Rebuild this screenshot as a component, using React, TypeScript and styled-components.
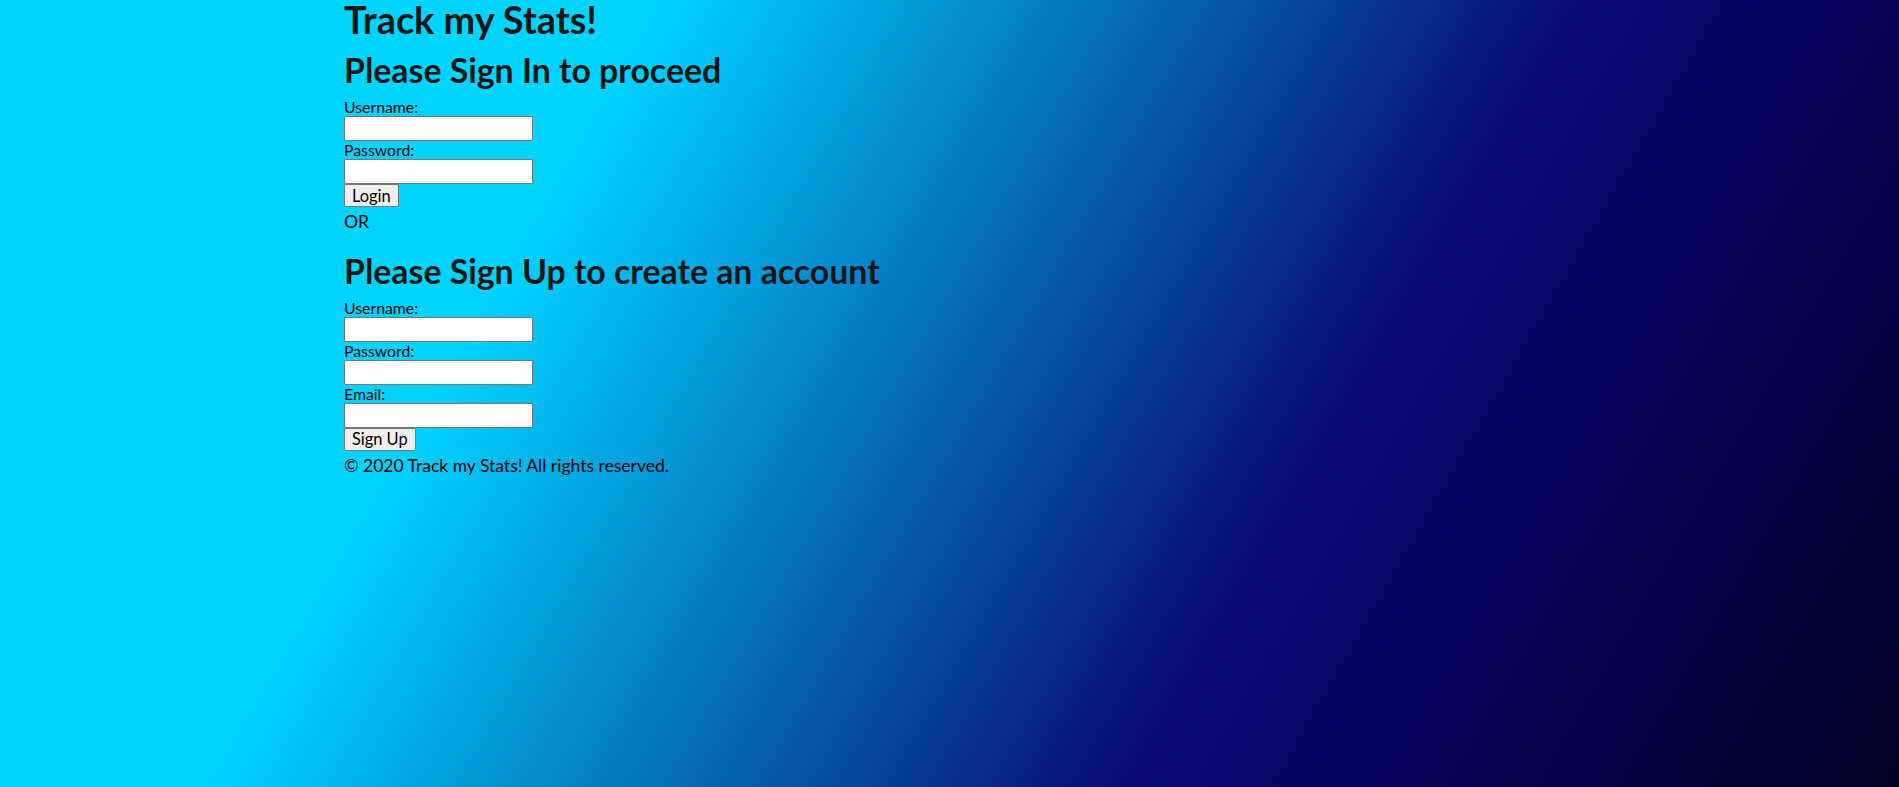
import React from "react";
import styled, { createGlobalStyle } from "styled-components";

const GlobalStyle = createGlobalStyle`
  html, body { margin: 0; padding: 0; }
  body {
    min-height: 100vh;
    font-family: Lato, "Open Sans", sans-serif;
    color: #000;
    background: linear-gradient(120deg, #00d4ff 28%, #090979 67%, #020024 100%);
  }
`;

const Page = styled.div`
  width: 1211px;
  margin: 0 auto;
`;

const Title = styled.h1`
  margin: 0;
  font-size: 37.8px;
  line-height: 40px;
  font-weight: 700;
  color: #151515;
`;

const Heading = styled.h2<{ $top: number }>`
  margin: ${(p) => p.$top}px 0 8px;
  font-size: 33.85px;
  line-height: 40px;
  font-weight: 700;
  color: #151515;
`;

const Form = styled.form`
  display: flex;
  flex-direction: column;
  align-items: flex-start;
`;

const Label = styled.label`
  font-size: 15.8px;
  line-height: 18px;
`;

const Input = styled.input`
  box-sizing: border-box;
  width: 189px;
  height: 25px;
  margin: 0;
  border: 1px solid #767676;
  border-radius: 2px;
  background: #fff;
`;

const Button = styled.button`
  box-sizing: border-box;
  height: 23px;
  margin: 0;
  padding: 0 7px;
  font-family: inherit;
  font-size: 16.4px;
  line-height: 20px;
  border: 1px solid #767676;
  border-radius: 2px;
  background: #efefef;
  color: #000;
`;

const TextLine = styled.div`
  font-size: 17.5px;
  line-height: 29px;
`;

export default function App() {
  return (
    <>
      <GlobalStyle />
      <Page>
        <Title>Track my Stats!</Title>
        <Heading $top={10.4}>Please Sign In to proceed</Heading>
        <Form>
          <Label>Username:</Label>
          <Input type="text" />
          <Label>Password:</Label>
          <Input type="password" />
          <Button type="button">Login</Button>
        </Form>
        <TextLine>OR</TextLine>
        <Heading $top={14.3}>Please Sign Up to create an account</Heading>
        <Form>
          <Label>Username:</Label>
          <Input type="text" />
          <Label>Password:</Label>
          <Input type="password" />
          <Label>Email:</Label>
          <Input type="email" />
          <Button type="button">Sign Up</Button>
        </Form>
        <TextLine as="footer">© 2020 Track my Stats! All rights reserved.</TextLine>
      </Page>
    </>
  );
}
